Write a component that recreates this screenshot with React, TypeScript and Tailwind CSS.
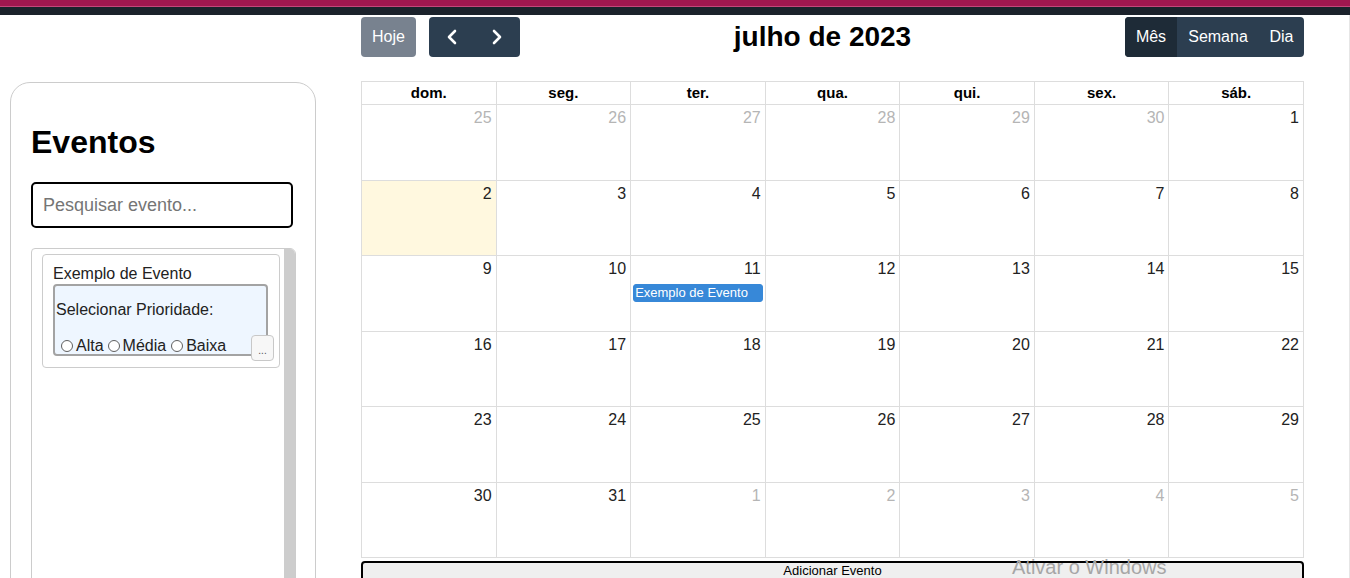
import { ChevronLeft, ChevronRight } from 'lucide-react';

const weekDays = ['dom.', 'seg.', 'ter.', 'qua.', 'qui.', 'sex.', 'sáb.'];

interface Day {
  n: number;
  other: boolean;
  today?: boolean;
  event?: string;
}

function buildDays(): Day[] {
  const days: Day[] = [];
  for (let d = 25; d <= 30; d++) days.push({ n: d, other: true });
  for (let d = 1; d <= 31; d++) {
    days.push({
      n: d,
      other: false,
      today: d === 2,
      event: d === 11 ? 'Exemplo de Evento' : undefined,
    });
  }
  for (let d = 1; d <= 5; d++) days.push({ n: d, other: true });
  return days;
}

function Sidebar() {
  return (
    <aside className="ml-[10px] mt-[67px] h-[620px] w-[306px] shrink-0 rounded-[20px] border border-[#ccc] px-[20px]">
      <h1 className="mt-[41px] mb-[21px] text-[32px] font-bold leading-[37px] text-black">Eventos</h1>
      <input
        className="h-[46px] w-[262px] rounded-[5px] border-2 border-black px-[10px] text-[18px] text-black outline-none placeholder:text-[#757575]"
        placeholder="Pesquisar evento..."
      />
      <div className="relative mt-[20px] h-[400px] w-[265px] rounded-tl-[4px] rounded-tr-[6px] border border-[#ccc] pl-[10px] pr-[16px] pt-[5px]">
        <div className="absolute right-0 top-0 h-full w-[11px] rounded-tr-[5px] bg-[#cdcdcd]" />
        <div className="relative h-[114px] w-[238px] rounded-[4px] border border-[#ccc] px-[10px] pt-[10px]">
          <div className="text-[16px] leading-[18px] text-[#222]">Exemplo de Evento</div>
          <div className="mt-[1px] h-[72px] w-[215px] rounded-[4px] border-2 border-[#a3a3a3] bg-[#eef6ff] pl-[1px] pt-[15px] text-[16px] leading-[18px] text-[#222]">
            <div>Selecionar Prioridade:</div>
            <div className="mt-[18px] flex items-center">
              <span className="ml-[5px] mr-[3px] inline-block h-[12px] w-[12px] rounded-full border border-[#5f5f5f] bg-white" />
              <span>Alta</span>
              <span className="ml-[4px] mr-[3px] inline-block h-[12px] w-[12px] rounded-full border border-[#5f5f5f] bg-white" />
              <span>Média</span>
              <span className="ml-[5px] mr-[3px] inline-block h-[12px] w-[12px] rounded-full border border-[#5f5f5f] bg-white" />
              <span>Baixa</span>
            </div>
          </div>
          <button className="absolute left-[208px] top-[80px] flex h-[26px] w-[23px] items-end justify-center rounded-[4px] border border-[#c8c8c8] bg-[#f7f7f7] pb-[4px] text-[10px] leading-[10px] text-[#555]">
            ...
          </button>
        </div>
      </div>
    </aside>
  );
}

function Toolbar() {
  return (
    <div className="mb-[24px] flex h-[40px] items-center justify-between">
      <div className="flex items-center">
        <button className="h-[40px] w-[55px] rounded-[4px] bg-[#78828f] text-[16px] text-white">Hoje</button>
        <div className="ml-[13px] flex h-[40px] overflow-hidden rounded-[4px] bg-[#2c3e50]">
          <button className="flex w-[45px] items-center justify-center text-white">
            <ChevronLeft size={24} strokeWidth={2.6} />
          </button>
          <button className="flex w-[46px] items-center justify-center text-white">
            <ChevronRight size={24} strokeWidth={2.6} />
          </button>
        </div>
      </div>
      <h2 className="text-[28px] font-bold leading-[32px] text-black">julho de 2023</h2>
      <div className="flex h-[40px] overflow-hidden rounded-[4px] bg-[#2c3e50] text-[16px] text-white">
        <button className="w-[52px] bg-[#1e2b37]">Mês</button>
        <button className="w-[82px]">Semana</button>
        <button className="w-[45px]">Dia</button>
      </div>
    </div>
  );
}

function MonthGrid() {
  const days = buildDays();
  return (
    <div className="border-l border-t border-[#ddd]">
      <div className="grid grid-cols-7">
        {weekDays.map((w) => (
          <div
            key={w}
            className="h-[23px] border-b border-r border-[#ddd] text-center text-[15px] font-bold leading-[22px] text-black"
          >
            {w}
          </div>
        ))}
      </div>
      <div className="grid grid-cols-7">
        {days.map((d, i) => (
          <div
            key={i}
            className={`h-[75.5px] border-b border-r border-[#ddd] ${d.today ? 'bg-[#fff8df]' : 'bg-white'}`}
          >
            <div
              className={`px-[4px] pt-[4px] text-right text-[16px] leading-[18px] ${
                d.other ? 'text-[#b5b5b5]' : 'text-[#222]'
              }`}
            >
              {d.n}
            </div>
            {d.event && (
              <div className="mx-[2px] mt-[6px] h-[18px] rounded-[3px] border border-[#3788d8] bg-[#3788d8] px-[1px] text-[13px] leading-[16px] text-white">
                {d.event}
              </div>
            )}
          </div>
        ))}
      </div>
    </div>
  );
}

export default function App() {
  return (
    <div className="relative h-screen w-full overflow-hidden bg-white font-['Liberation_Sans',Arial,sans-serif]">
      <div className="h-[6px] bg-[#a1174f]" />
      <div className="h-px bg-[#c4477a]" />
      <div className="h-[8px] bg-[#1b222b]" />
      <div className="flex h-full border-r border-[#e6e6e6]">
        <Sidebar />
        <main className="ml-[45px] w-[943px] shrink-0 pt-[2px]">
          <Toolbar />
          <MonthGrid />
          <button className="h-[32px] w-full rounded-[4px] border-2 border-black bg-[#efefef] pb-[12px] text-[13px] leading-[16px] text-black">
            Adicionar Evento
          </button>
        </main>
      </div>
      <div className="pointer-events-none absolute left-[1012px] top-[555px] text-[20px] leading-[24px] text-[#a6a6a6]">
        Ativar o Windows
      </div>
    </div>
  );
}
